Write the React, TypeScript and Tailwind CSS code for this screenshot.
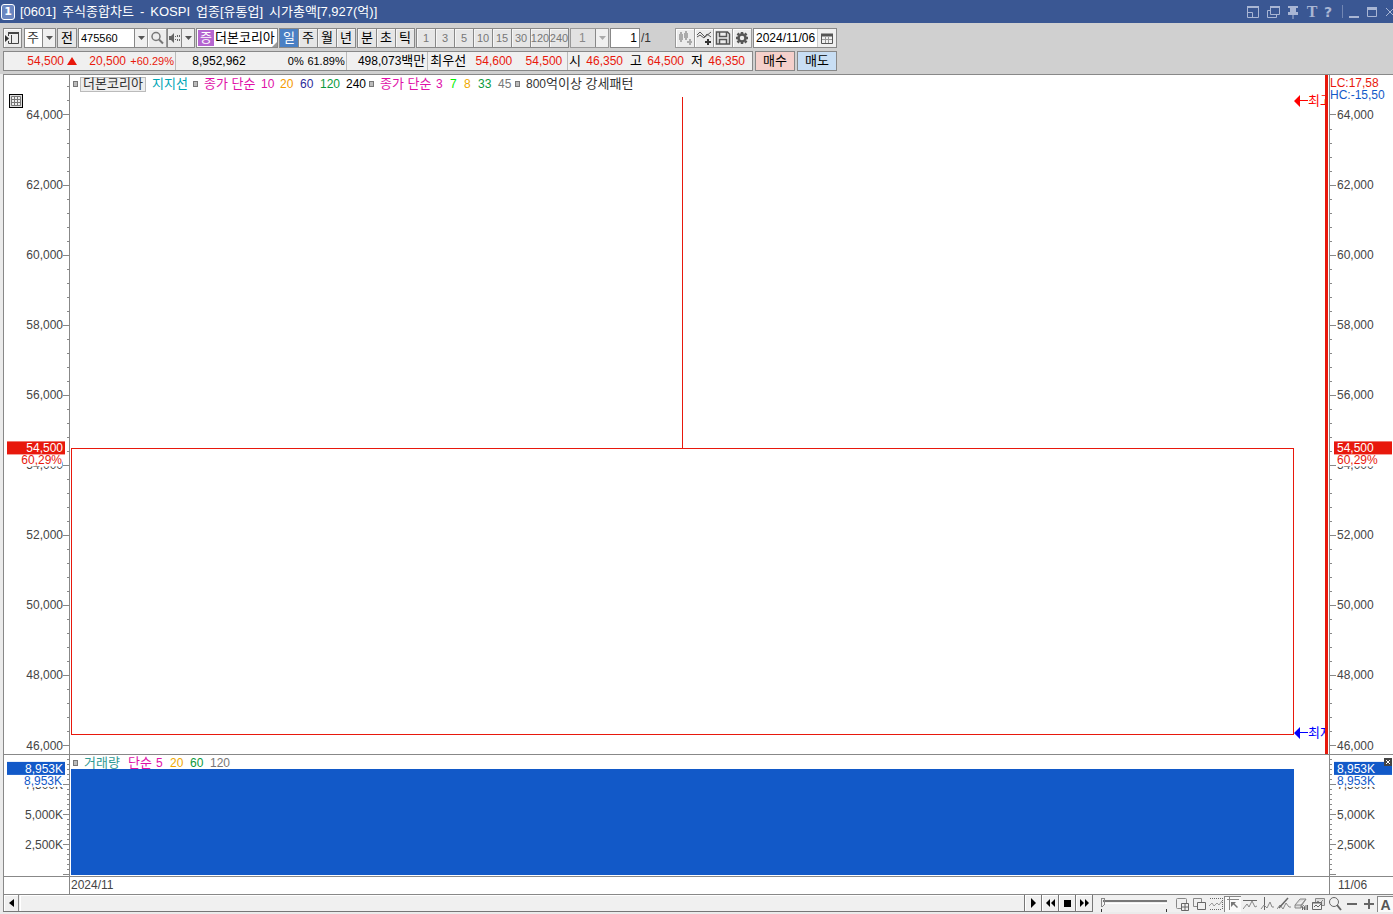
import type { ReactNode } from 'react';
import { clsx } from 'clsx';

const TITLE = ['[0601]', '주식종합차트', '-', 'KOSPI', '업종[유통업]', '시가총액[7,927(억)]'];
const PERIODS = ['일', '주', '월', '년'];
const UNITS = ['분', '초', '틱'];
const MINUTES = ['1', '3', '5', '10', '15', '30', '120', '240'];

// visible ranges: value at the top and at the bottom of each pane
const PRICE = { top: 65142, bottom: 45758, step: 2000, minor: 400 };
const VOLUME = { top: 9990, bottom: -93, step: 2500, minor: 416.667 };

type Range = typeof PRICE;

const span = (range: Range, value: number) =>
  `${((value / (range.top - range.bottom)) * 100).toFixed(3)}%`;

const toY = (range: Range, value: number) => span(range, range.top - value);

const steps = (range: Range, size: number) => {
  const list: number[] = [];
  for (let i = Math.ceil(range.bottom / size); i * size <= range.top; i++) list.push(i * size);
  return list;
};

type LegendEntry = { text: string; className: string };

const PRICE_LEGEND: LegendEntry[][] = [
  [{ text: '지지선', className: 'w-[41px] text-[13px] text-[#00a5b5]' }],
  [
    { text: '종가 단순', className: 'w-[57px] text-[13px] text-[#e010a8]' },
    { text: '10', className: 'w-[19px] text-[#e010a8]' },
    { text: '20', className: 'w-5 text-[#f59a00]' },
    { text: '60', className: 'w-5 text-[#2b2b9a]' },
    { text: '120', className: 'w-[26px] text-[#0a9a3c]' },
    { text: '240', className: 'w-[23px] text-black' },
  ],
  [
    { text: '종가 단순', className: 'w-[56px] text-[13px] text-[#e010a8]' },
    { text: '3', className: 'w-[14px] text-[#e010a8]' },
    { text: '7', className: 'w-[14px] text-[#00f000]' },
    { text: '8', className: 'w-[14px] text-[#f0a800]' },
    { text: '33', className: 'w-5 text-[#0a9a3c]' },
    { text: '45', className: 'w-[17px] text-[#777]' },
  ],
  [
    { text: '800', className: 'text-[#333]' },
    { text: '억이상 강세패턴', className: 'text-[13px] text-[#333]' },
  ],
];

const VOLUME_LEGEND: LegendEntry[] = [
  { text: '거래량', className: 'w-11 text-[13px] text-[#2f9a94]' },
  { text: '단순', className: 'w-[28px] text-[13px] text-[#e010a8]' },
  { text: '5', className: 'w-[14px] text-[#e010a8]' },
  { text: '20', className: 'w-5 text-[#f0a800]' },
  { text: '60', className: 'w-5 text-[#0a9a3c]' },
  { text: '120', className: 'text-[#777]' },
];

export default function App() {
  return (
    <div className="flex h-screen min-h-[480px] flex-col overflow-hidden bg-[#d0d0d0] font-['Liberation_Sans','Noto_Sans_CJK_KR',sans-serif] text-[12px] leading-4 text-black">
      <TitleBar />
      <div className="flex flex-col gap-[3px] px-[3px] pt-[5px] pb-[3px]">
        <Toolbar />
        <QuoteBar />
      </div>
      <main className="flex min-h-0 flex-1 flex-col bg-[#ebebeb] pl-[3px]">
        <div className="flex min-h-0 flex-1 flex-col border-t border-l border-[#888] bg-white">
          <PricePane />
          <VolumePane />
          <DateRow />
        </div>
        <BottomBar />
      </main>
    </div>
  );
}

function TitleBar() {
  return (
    <header className="flex h-[23px] shrink-0 items-center bg-[#3a5793] pl-[1px] text-white">
      <span className="flex h-4 w-[14px] items-center justify-center rounded-[3px] border border-white bg-[#6a86c0] font-['DejaVu_Sans'] text-[11px] font-bold">
        1
      </span>
      <h1 className="flex gap-[6px] pl-[5px] text-[13px] whitespace-nowrap">
        {TITLE.map((word) => (
          <span key={word}>{word}</span>
        ))}
      </h1>
      <div className="ml-auto flex items-center text-[#a9b6d4]">
        <WindowButton label="축소" className="w-5">
          <path d="M1.500 1.500h11v11h-11zM1.500 7.500h5v5" />
          <path strokeWidth="2" d="M1 2h12" />
        </WindowButton>
        <WindowButton label="복제" className="w-5">
          <path d="M4.500 1.500h9v8h-9zM4.500 5.500h-3v7h9v-3" />
          <path strokeWidth="2" d="M4 2h10" />
        </WindowButton>
        <WindowButton label="고정" className="w-[18px]">
          <path fill="currentColor" stroke="none" d="M2 1h10v2h-2v4h2v3H7.500v4h-1v-4H2V7h2V3H2z" />
        </WindowButton>
        <button aria-label="글꼴" className="w-[16px] font-['Liberation_Serif'] text-[16px] font-bold">
          T
        </button>
        <button aria-label="도움말" className="w-[16px] font-['DejaVu_Sans'] text-[14px] font-bold">
          ?
        </button>
        <span className="mr-[4px] ml-[6px] h-[13px] w-px bg-[#7186b3]" />
        <WindowButton label="최소화" className="w-[18px]">
          <path strokeWidth="2" d="M2 12h10" />
        </WindowButton>
        <WindowButton label="최대화" className="w-[18px]">
          <path d="M2.500 2.500h9v9h-9z" />
          <path strokeWidth="3" d="M2 3.500h10" />
        </WindowButton>
        <WindowButton label="닫기" className="w-[10px]">
          <path d="M3 3l8 8M11 3l-8 8" />
        </WindowButton>
      </div>
    </header>
  );
}

function WindowButton({ label, className, children }: { label: string; className: string; children: ReactNode }) {
  return (
    <button aria-label={label} className={clsx('flex h-4 shrink-0 items-center overflow-hidden', className)}>
      <svg width="14" height="14" viewBox="0 0 14 14" fill="none" stroke="currentColor" className="shrink-0">
        {children}
      </svg>
    </button>
  );
}

function Arrow({ muted }: { muted?: boolean }) {
  return (
    <span className="flex h-full w-[13px] shrink-0 items-center justify-center border-l border-[#888] bg-[#f0f0f0]">
      <svg width="7" height="4" viewBox="0 0 7 4" className={muted ? 'fill-[#aaa]' : 'fill-[#555]'}>
        <path d="M0 0h7L3.500 4z" />
      </svg>
    </span>
  );
}

function IconButton({ label, children }: { label: string; children: ReactNode }) {
  return (
    <button
      aria-label={label}
      className="-ml-px flex h-5 w-5 shrink-0 items-center justify-center border border-[#999] bg-[#ececec] shadow-[inset_1px_1px_0_#fff]"
    >
      <svg width="16" height="16" viewBox="0 0 16 16" fill="none" stroke="#555" className="shrink-0">
        {children}
      </svg>
    </button>
  );
}

function ButtonGroup({ items, active, muted }: { items: string[]; active?: string; muted?: boolean }) {
  return (
    <div className="flex h-5 border-y border-r border-[#888]">
      {items.map((item) => (
        <button
          key={item}
          className={clsx(
            'flex h-full w-[19px] items-center justify-center border-l border-[#888]',
            item === active ? 'bg-[#4a80c4] text-white' : 'bg-[#e6e6e6] shadow-[inset_1px_1px_0_#f6f6f6]',
            muted ? 'text-[11px] text-[#777]' : 'text-[13px]',
          )}
        >
          {item}
        </button>
      ))}
    </div>
  );
}

function Toolbar() {
  return (
    <div className="flex h-5 items-center">
      <button
        aria-label="메뉴 열기"
        className="flex h-5 w-[19px] items-center justify-center border border-[#888] bg-[#ececec] shadow-[inset_1px_1px_0_#fff]"
      >
        <svg width="15" height="14" viewBox="0 0 15 14" fill="none" stroke="#444" className="shrink-0">
          <path d="M3.500 5V1.500h10v11h-10V10M6.500 4v8" />
          <path strokeWidth="2" d="M3 2h11" />
          <path fill="#333" stroke="none" d="M0 4l4 3.500-4 3.500z" />
        </svg>
      </button>
      <label className="ml-[2px] flex h-5 w-8 border border-[#888] bg-white">
        <select aria-label="종류" className="w-[17px] appearance-none pl-[2px] text-[13px] text-[#333]">
          <option>주</option>
        </select>
        <Arrow />
      </label>
      <button className="ml-px h-5 w-5 border border-[#888] bg-[#e6e6e6] text-[13px]">전</button>
      <label className="ml-px flex h-5 w-[70px] border border-[#888] bg-white">
        <input aria-label="종목코드" defaultValue="475560" className="min-w-0 flex-1 pl-[2px] text-[11px] outline-none" />
        <Arrow />
      </label>
      <IconButton label="검색">
        <circle cx="7" cy="6.500" r="4" strokeWidth="1.500" stroke="#777" />
        <path strokeWidth="2" stroke="#777" d="M10 9.500l4 4" />
      </IconButton>
      <div className="flex h-5 w-[28px] border border-[#888] bg-[#ececec]">
        <button aria-label="음성" className="flex min-w-0 flex-1 items-center">
          <svg width="13" height="14" viewBox="0 0 13 14" fill="#666" className="shrink-0">
            <path d="M1 5h2l3-3v10L3 9H1z" />
            <path d="M7 5h1v1H7zM9 4h1v2H9zM11 4h1v2h-1zM7 8h1v1H7zM9 8h1v2H9zM11 8h1v2h-1z" />
          </svg>
        </button>
        <Arrow />
      </div>
      <div className="relative ml-px flex h-5 w-[82px] items-center border border-[#888] bg-white">
        <span className="ml-px flex h-4 w-4 shrink-0 items-center justify-center bg-[#b565d0] text-[13px] text-white">증</span>
        <span className="pl-px text-[13px] whitespace-nowrap">더본코리아</span>
        <svg width="5" height="5" className="absolute right-0 bottom-0 fill-[#999]">
          <path d="M5 0v5H0z" />
        </svg>
      </div>
      <div className="ml-px flex gap-px">
        <ButtonGroup items={PERIODS} active="일" />
        <ButtonGroup items={UNITS} />
        <ButtonGroup items={MINUTES} muted />
      </div>
      <label className="ml-px flex h-5 w-[39px] border border-[#999] bg-[#e2e2e2]">
        <select aria-label="분 간격" className="min-w-0 flex-1 appearance-none pl-2 text-[#888]">
          <option>1</option>
        </select>
        <Arrow muted />
      </label>
      <input aria-label="페이지" defaultValue="1" className="ml-px h-5 w-[30px] border border-[#888] bg-white pr-[2px] text-right" />
      <span className="w-[36px] pl-px text-[#333]">/1</span>
      <IconButton label="봉 추가">
        <path fill="#aaa" stroke="none" d="M2 4h4v6H2zM3 2h2v10H3zM7 3h4v5H7zM8 1h2v9H8zM10 11h5v2h-5zM12 9h2v6h-2z" />
      </IconButton>
      <IconButton label="지표 추가">
        <path d="M1 5l3-3 5 5 6-5M1 7l3-2 4 3 3-4 4 3" />
        <path fill="#333" stroke="none" d="M9 11h6v2H9zM11 9h2v6h-2z" />
      </IconButton>
      <IconButton label="저장">
        <path strokeWidth="1.500" d="M1.500 2h11l2 2v10h-13zM4.500 2v4.500h7V2M4.500 14V9.500h7V14" />
      </IconButton>
      <IconButton label="설정">
        <circle cx="8" cy="8" r="3.500" strokeWidth="2.500" />
        <path strokeWidth="2.500" d="M8 2v2M8 12v2M2 8h2M12 8h2M3.500 3.500l1.500 1.500M11 11l1.500 1.500M12.500 3.500L11 5M5 11l-1.500 1.500" />
      </IconButton>
      <label className="ml-px flex h-5 w-[84px] border border-[#888] bg-white">
        <input aria-label="날짜" defaultValue="2024/11/06" className="min-w-0 flex-1 pl-[2px] outline-none" />
        <span className="flex w-[19px] items-center justify-center border-l border-[#ccc] bg-[#f0f0f0]">
          <svg width="12" height="11" viewBox="0 0 12 11" fill="none" stroke="#555">
            <path d="M.5 1.500h11v9H.5z" />
            <path stroke="#999" d="M4.500 4v6M7.500 4v6M1 6.500h10" />
            <path strokeWidth="3" d="M0 2h12" />
          </svg>
        </span>
      </label>
    </div>
  );
}

function QuoteBar() {
  return (
    <div className="flex h-5">
      <div className="flex h-5 w-[750px] shrink-0 items-center border border-[#888] bg-[#f0f0f0] text-[#e8180c]">
        <div className="flex h-full w-[172px] items-center border-r border-[#bbb]">
          <span className="w-[60px] text-right">54,500</span>
          <svg width="10" height="8" className="ml-[3px] fill-[#e8180c]">
            <path d="M5 0l5 8H0z" />
          </svg>
          <span className="w-[49px] text-right">20,500</span>
          <span className="w-[48px] text-right text-[11px]">+60.29%</span>
        </div>
        <div className="flex h-full w-[172px] items-center border-r border-[#bbb] text-black">
          <span className="w-[70px] text-right">8,952,962</span>
          <span className="w-[58px] text-right text-[11px]">0%</span>
          <span className="w-[41px] text-right text-[11px]">61.89%</span>
        </div>
        <div className="flex h-full w-[81px] items-center justify-end border-r border-[#bbb] pr-[2px] text-black">
          498,073<span className="text-[13px]">백만</span>
        </div>
        <div className="flex h-full w-[140px] items-center border-r border-[#bbb] pl-[2px]">
          <span className="w-[36px] text-[13px] text-black">최우선</span>
          <span className="w-[46px] text-right">54,600</span>
          <span className="w-[50px] text-right">54,500</span>
        </div>
        <div className="flex h-full flex-1 items-center pl-px">
          {[
            ['시', '46,350'],
            ['고', '64,500'],
            ['저', '46,350'],
          ].map(([label, value]) => (
            <span key={label} className="flex w-[61px]">
              <span className="w-3 text-[13px] text-black">{label}</span>
              <span className="w-[42px] text-right">{value}</span>
            </span>
          ))}
        </div>
      </div>
      <button className="ml-[2px] h-5 w-10 shrink-0 border border-[#888] bg-[#f5d0cb] text-[13px]">매수</button>
      <button className="ml-[2px] h-5 w-10 shrink-0 border border-[#888] bg-[#c8def4] text-[13px]">매도</button>
    </div>
  );
}

type AxisProps = {
  side: 'left' | 'right';
  range: Range;
  format: (value: number) => string;
  current: number;
  tag: string;
  sub: string;
  color: string;
  children?: ReactNode;
};

function Axis({ side, range, format, current, tag, sub, color, children }: AxisProps) {
  const left = side === 'left';
  const labelX = left ? 59 : 7;
  const anchor = left ? 'end' : 'start';

  return (
    <div className={clsx('relative shrink-0 border-[#888]', left ? 'w-[66px] border-r' : 'w-[64px] border-l')}>
      <svg className="absolute inset-0 h-full w-full">
        {steps(range, range.minor).map((value) => (
          <line
            key={value}
            x1={left ? 63 : 0}
            x2={left ? 65 : 2}
            y1={toY(range, value)}
            y2={toY(range, value)}
            stroke="#888"
            shapeRendering="crispEdges"
          />
        ))}
        {steps(range, range.step).map((value) => (
          <svg key={value} y={toY(range, value)} className="overflow-visible">
            <path d={left ? 'M59 0h6' : 'M0 0h6'} stroke="#888" shapeRendering="crispEdges" />
            <text x={labelX} y="4" textAnchor={anchor} fill="#444">
              {format(value)}
            </text>
          </svg>
        ))}
        <svg y={toY(range, current)} className="overflow-visible">
          <rect x={left ? 3 : 7} y="6" width="55" height="12" fill="#fff" />
          <rect x={left ? 3 : 4} y="-7" width="58" height="13" fill={color} />
          <text x={labelX} y="4" textAnchor={anchor} fill="#fff">
            {tag}
          </text>
          <text x={left ? 58 : 7} y="16" textAnchor={anchor} fill={color}>
            {sub}
          </text>
        </svg>
        {children}
      </svg>
    </div>
  );
}

function Marker() {
  return <span className="h-[6px] w-[5px] shrink-0 border border-[#777] bg-[#bbb]" />;
}

function Legend({ entries }: { entries: LegendEntry[] }) {
  return entries.map((entry) => (
    <span key={entry.text} className={clsx('shrink-0', entry.className)}>
      {entry.text}
    </span>
  ));
}

function Extreme({ text, className }: { text: string; className: string }) {
  return (
    <div className={clsx('flex items-center text-[13px] whitespace-nowrap', className)}>
      <svg width="14" height="12" viewBox="0 0 14 12" className="shrink-0 fill-current">
        <path d="M0 6l6-6v5h8v1H6v6z" />
      </svg>
      {text}
    </div>
  );
}

function PricePane() {
  const axis = {
    range: PRICE,
    format: (value: number) => value.toLocaleString('en-US'),
    current: 54482,
    tag: '54,500',
    sub: '60,29%',
    color: '#e8180c',
  };

  return (
    <section className="relative flex min-h-0 flex-1">
      <Axis side="left" {...axis} />
      <svg className="h-full min-w-0 flex-1" stroke="#e8180c" fill="none" shapeRendering="crispEdges">
        <line x1="50%" x2="50%" y1={toY(PRICE, 64500)} y2={toY(PRICE, 54482)} />
        <rect x="1.500" y={toY(PRICE, 54467)} height={span(PRICE, 8150)} className="w-[calc(100%-2px)]" />
      </svg>
      <div className="flex w-[31px] shrink-0 flex-col justify-between overflow-hidden pt-[18px] pb-[13px]">
        <Extreme text="최고" className="text-[#f00]" />
        <Extreme text="최저" className="text-[#00f]" />
      </div>
      <span className="mr-px w-[3px] shrink-0 bg-[#e8180c]" />
      <Axis side="right" {...axis}>
        <rect width="60" height="26" fill="#fff" />
        <text y="12" fill="#e8180c">
          LC:17,58
        </text>
        <text y="24" fill="#1259c8">
          HC:-15,50
        </text>
      </Axis>
      <div className="absolute top-px left-[69px] flex h-4 items-center whitespace-nowrap">
        <Marker />
        <span className="mr-[6px] ml-[2px] flex h-[15px] w-[66px] items-center justify-center border border-[#bbb] bg-[#eee] text-[13px] text-[#333]">
          더본코리아
        </span>
        {PRICE_LEGEND.map((entries, index) => (
          <span key={index} className="flex items-center">
            {index > 0 ? (
              <span className="flex w-[11px]">
                <Marker />
              </span>
            ) : null}
            <Legend entries={entries} />
          </span>
        ))}
      </div>
      <button
        aria-label="표 보기"
        className="absolute top-[19px] left-[5px] flex h-[14px] w-[14px] items-center justify-center border border-black bg-[#ddd]"
      >
        <svg width="10" height="10" viewBox="0 0 10 10" fill="#eee" stroke="#777" className="shrink-0">
          <path d="M.5.5h9v9h-9zM3.500.5v9M6.500.5v9M.5 3.500h9M.5 6.500h9" />
        </svg>
      </button>
    </section>
  );
}

function VolumePane() {
  const axis = {
    range: VOLUME,
    format: (value: number) => (value ? `${value.toLocaleString('en-US')}K` : ''),
    current: 8832,
    tag: '8,953K',
    sub: '8,953K',
    color: '#1259c8',
  };

  return (
    <section className="relative flex h-[122px] shrink-0 border-t border-[#888]">
      <Axis side="left" {...axis} />
      <svg className="h-full min-w-0 flex-1">
        <rect x="1" y={toY(VOLUME, 8832)} width="100%" height="87.700%" fill="#1259c8" shapeRendering="crispEdges" />
      </svg>
      <span className="w-[35px] shrink-0" />
      <Axis side="right" {...axis} />
      <div className="absolute top-0 left-[69px] flex h-4 items-center gap-[6px] whitespace-nowrap">
        <Marker />
        <span className="flex">
          <Legend entries={VOLUME_LEGEND} />
        </span>
      </div>
      <button aria-label="닫기" className="absolute top-[3px] right-px flex h-2 w-2 items-center justify-center bg-[#444]">
        <svg width="4" height="4" viewBox="0 0 4 4" stroke="#fff" className="shrink-0">
          <path d="M0 0l4 4M4 0L0 4" />
        </svg>
      </button>
    </section>
  );
}

function DateRow() {
  return (
    <div className="flex h-[19px] shrink-0 border-y border-[#888] text-[#444]">
      <span className="w-[66px] border-r border-[#888]" />
      <span className="flex-1 pl-px">2024/11</span>
      <span className="w-[64px] border-l border-[#888] pl-2">11/06</span>
    </div>
  );
}

const PLAYBACK = [
  { label: '재생', d: 'M3 0l5 5-5 5z' },
  { label: '뒤로', d: 'M5 1v8L1 5zM10 1v8L6 5z' },
  { label: '정지', d: 'M2 2h7v7H2z' },
  { label: '앞으로', d: 'M1 1v8l4-4zM6 1v8l4-4z' },
];

function ToolButton({ label, active, children }: { label: string; active?: boolean; children: ReactNode }) {
  return (
    <button
      aria-label={label}
      className={clsx(
        'flex h-4 w-[17px] shrink-0 items-center justify-center',
        active && 'border-t border-l border-[#888] bg-[#fafafa]',
      )}
    >
      <svg width="14" height="14" viewBox="0 0 14 14" fill="none" stroke="#666" className="shrink-0">
        {children}
      </svg>
    </button>
  );
}

function BottomBar() {
  return (
    <footer className="mb-[2px] flex h-[17px] shrink-0 items-center bg-[#f0f0f0]">
      <div className="flex h-full min-w-0 flex-1 border-b border-[#777]">
        <button
          aria-label="왼쪽으로"
          className="flex w-4 items-center justify-center border-r border-l border-[#888] shadow-[inset_1px_1px_0_#fff]"
        >
          <svg width="5" height="8">
            <path d="M5 0v8L0 4z" />
          </svg>
        </button>
        <div className="ml-px flex-1 border-r border-[#777] shadow-[inset_1px_1px_0_#fff]" />
        {PLAYBACK.map(({ label, d }) => (
          <button
            key={label}
            aria-label={label}
            className="flex w-[17px] items-center justify-center border-r border-[#777] shadow-[inset_1px_1px_0_#fff]"
          >
            <svg width="11" height="10">
              <path d={d} />
            </svg>
          </button>
        ))}
      </div>
      <svg width="80" height="16" className="shrink-0" fill="none" shapeRendering="crispEdges">
        <path d="M10 5h64" stroke="#777" strokeWidth="2" />
        <path d="M10 7.500h64" stroke="#fff" />
        <path d="M8.500 11V2.500h3v6l-3 3" stroke="#888" />
        <path d="M8.500 13v3M73.500 13v3" stroke="#333" />
      </svg>
      <ToolButton label="새 창">
        <rect x="1.500" y="1.500" width="10" height="10" rx="1" stroke="#888" />
        <path fill="#f0f0f0" d="M6.500 6.500h7v7h-7zM10 6.500v7M6.500 10h7" />
      </ToolButton>
      <ToolButton label="창 겹치기">
        <path stroke="#888" d="M1.500 1.500h8v8h-8z" />
        <path fill="#f0f0f0" d="M5.500 5.500h8v7h-8z" />
      </ToolButton>
      <ToolButton label="영역">
        <path strokeDasharray="1 1" d="M1 1.500h12M1 12.500h12M13.500 1v12" />
        <path stroke="#999" d="M0 9l3-3 2 3 3-3 2 2 3-4" />
      </ToolButton>
      <ToolButton label="선택" active>
        <path d="M1 2.500h12M3.500 0v13" stroke="#888" />
        <path fill="#777" stroke="none" d="M5 5h5L8.500 6.500 12 10l-1 1-3.500-3.500L5 10z" />
      </ToolButton>
      <ToolButton label="고점선">
        <path d="M0 3.500h14" />
        <path stroke="#888" d="M0 12l4-5 2 3 3-6 3 6 2-1" />
      </ToolButton>
      <ToolButton label="수직선">
        <path d="M4.500 0v13" />
        <path stroke="#888" d="M1 12l3-4 3 3 3-6 2 5h2" />
      </ToolButton>
      <ToolButton label="추세선">
        <path stroke="#888" d="M0 12l3-4 3 4 3-6 3 4h2" />
        <path strokeWidth="1.500" d="M2 11L11 1" />
      </ToolButton>
      <ToolButton label="모두 지우기">
        <path fill="#ddd" stroke="#888" d="M1 8l5-6h6l-4 6-1 3H1zM1 8h6l5-6M7 8v3" />
        <path d="M8.500 13V9.500l1-1 1 1V13M8.500 11h2M12 8v5M13.500 8v5" />
      </ToolButton>
      <ToolButton label="차트 복사">
        <path fill="#ddd" stroke="#888" d="M4.500 1.500h9v7h-9zM5 6l2-2 2 2 3-3" />
        <path fill="#f0f0f0" d="M1.500 5.500h9v7h-9z" />
        <path d="M3 10l2-2 2 2 3-3M1 6h10" />
      </ToolButton>
      <ToolButton label="돋보기">
        <circle cx="6" cy="5" r="4.500" />
        <path strokeWidth="2" d="M9 8l4 5" />
      </ToolButton>
      <ToolButton label="축소">
        <path strokeWidth="2" d="M2 7h10" />
      </ToolButton>
      <ToolButton label="확대">
        <path strokeWidth="2" d="M2 7h10M7 2v10" />
      </ToolButton>
      <button className="h-4 w-[16px] shrink-0 border-t border-l border-[#888] bg-[#fafafa] font-['Liberation_Sans'] text-[14px] font-bold text-[#555]">
        A
      </button>
    </footer>
  );
}
